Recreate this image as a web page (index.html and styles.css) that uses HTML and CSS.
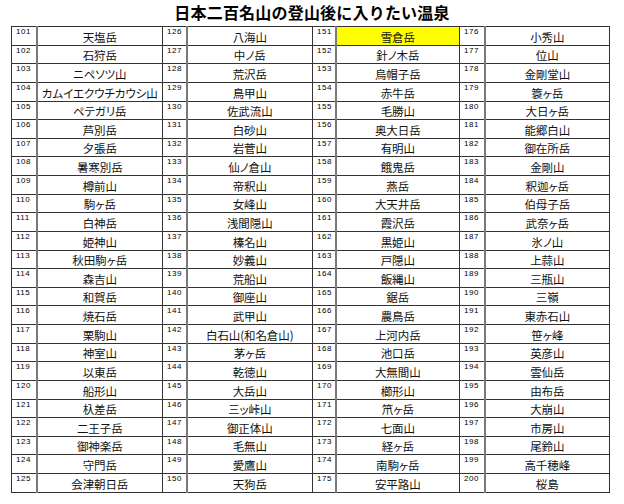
FILE: index.html
```html
<!DOCTYPE html>
<html lang="ja">
<head>
<meta charset="utf-8">
<title>日本二百名山の登山後に入りたい温泉</title>
<link rel="stylesheet" href="styles.css">
</head>
<body>
<h1 class="title">日本二百名山の登山後に入りたい温泉</h1>
<table class="list">
<colgroup>
<col class="c-n1"><col class="c-m1"><col class="c-n2"><col class="c-m2"><col class="c-n3"><col class="c-m3"><col class="c-n4"><col class="c-m4">
</colgroup>
<tbody>
<tr><td class="no">101</td><td class="nm">天塩岳</td><td class="no">126</td><td class="nm">八海山</td><td class="no">151</td><td class="nm hl">雪倉岳</td><td class="no">176</td><td class="nm">小秀山</td></tr>
<tr><td class="no">102</td><td class="nm">石狩岳</td><td class="no">127</td><td class="nm">中ノ岳</td><td class="no">152</td><td class="nm">針ノ木岳</td><td class="no">177</td><td class="nm">位山</td></tr>
<tr><td class="no">103</td><td class="nm">ニペソツ山</td><td class="no">128</td><td class="nm">荒沢岳</td><td class="no">153</td><td class="nm">烏帽子岳</td><td class="no">178</td><td class="nm">金剛堂山</td></tr>
<tr><td class="no">104</td><td class="nm">カムイエクウチカウシ山</td><td class="no">129</td><td class="nm">鳥甲山</td><td class="no">154</td><td class="nm">赤牛岳</td><td class="no">179</td><td class="nm">簑ヶ岳</td></tr>
<tr><td class="no">105</td><td class="nm">ペテガリ岳</td><td class="no">130</td><td class="nm">佐武流山</td><td class="no">155</td><td class="nm">毛勝山</td><td class="no">180</td><td class="nm">大日ヶ岳</td></tr>
<tr><td class="no">106</td><td class="nm">芦別岳</td><td class="no">131</td><td class="nm">白砂山</td><td class="no">156</td><td class="nm">奥大日岳</td><td class="no">181</td><td class="nm">能郷白山</td></tr>
<tr><td class="no">107</td><td class="nm">夕張岳</td><td class="no">132</td><td class="nm">岩菅山</td><td class="no">157</td><td class="nm">有明山</td><td class="no">182</td><td class="nm">御在所岳</td></tr>
<tr><td class="no">108</td><td class="nm">暑寒別岳</td><td class="no">133</td><td class="nm">仙ノ倉山</td><td class="no">158</td><td class="nm">餓鬼岳</td><td class="no">183</td><td class="nm">金剛山</td></tr>
<tr><td class="no">109</td><td class="nm">樽前山</td><td class="no">134</td><td class="nm">帝釈山</td><td class="no">159</td><td class="nm">燕岳</td><td class="no">184</td><td class="nm">釈迦ヶ岳</td></tr>
<tr><td class="no">110</td><td class="nm">駒ヶ岳</td><td class="no">135</td><td class="nm">女峰山</td><td class="no">160</td><td class="nm">大天井岳</td><td class="no">185</td><td class="nm">伯母子岳</td></tr>
<tr><td class="no">111</td><td class="nm">白神岳</td><td class="no">136</td><td class="nm">浅間隠山</td><td class="no">161</td><td class="nm">霞沢岳</td><td class="no">186</td><td class="nm">武奈ヶ岳</td></tr>
<tr><td class="no">112</td><td class="nm">姫神山</td><td class="no">137</td><td class="nm">榛名山</td><td class="no">162</td><td class="nm">黒姫山</td><td class="no">187</td><td class="nm">氷ノ山</td></tr>
<tr><td class="no">113</td><td class="nm">秋田駒ヶ岳</td><td class="no">138</td><td class="nm">妙義山</td><td class="no">163</td><td class="nm">戸隠山</td><td class="no">188</td><td class="nm">上蒜山</td></tr>
<tr><td class="no">114</td><td class="nm">森吉山</td><td class="no">139</td><td class="nm">荒船山</td><td class="no">164</td><td class="nm">飯縄山</td><td class="no">189</td><td class="nm">三瓶山</td></tr>
<tr><td class="no">115</td><td class="nm">和賀岳</td><td class="no">140</td><td class="nm">御座山</td><td class="no">165</td><td class="nm">鋸岳</td><td class="no">190</td><td class="nm">三嶺</td></tr>
<tr><td class="no">116</td><td class="nm">焼石岳</td><td class="no">141</td><td class="nm">武甲山</td><td class="no">166</td><td class="nm">農鳥岳</td><td class="no">191</td><td class="nm">東赤石山</td></tr>
<tr><td class="no">117</td><td class="nm">栗駒山</td><td class="no">142</td><td class="nm">白石山(和名倉山)</td><td class="no">167</td><td class="nm">上河内岳</td><td class="no">192</td><td class="nm">笹ヶ峰</td></tr>
<tr><td class="no">118</td><td class="nm">神室山</td><td class="no">143</td><td class="nm">茅ヶ岳</td><td class="no">168</td><td class="nm">池口岳</td><td class="no">193</td><td class="nm">英彦山</td></tr>
<tr><td class="no">119</td><td class="nm">以東岳</td><td class="no">144</td><td class="nm">乾徳山</td><td class="no">169</td><td class="nm">大無間山</td><td class="no">194</td><td class="nm">雲仙岳</td></tr>
<tr><td class="no">120</td><td class="nm">船形山</td><td class="no">145</td><td class="nm">大岳山</td><td class="no">170</td><td class="nm">櫛形山</td><td class="no">195</td><td class="nm">由布岳</td></tr>
<tr><td class="no">121</td><td class="nm">杁差岳</td><td class="no">146</td><td class="nm">三ッ峠山</td><td class="no">171</td><td class="nm">笊ヶ岳</td><td class="no">196</td><td class="nm">大崩山</td></tr>
<tr><td class="no">122</td><td class="nm">二王子岳</td><td class="no">147</td><td class="nm">御正体山</td><td class="no">172</td><td class="nm">七面山</td><td class="no">197</td><td class="nm">市房山</td></tr>
<tr><td class="no">123</td><td class="nm">御神楽岳</td><td class="no">148</td><td class="nm">毛無山</td><td class="no">173</td><td class="nm">経ヶ岳</td><td class="no">198</td><td class="nm">尾鈴山</td></tr>
<tr><td class="no">124</td><td class="nm">守門岳</td><td class="no">149</td><td class="nm">愛鷹山</td><td class="no">174</td><td class="nm">南駒ヶ岳</td><td class="no">199</td><td class="nm">高千穂峰</td></tr>
<tr><td class="no">125</td><td class="nm">会津朝日岳</td><td class="no">150</td><td class="nm">天狗岳</td><td class="no">175</td><td class="nm">安平路山</td><td class="no">200</td><td class="nm">桜島</td></tr>
</tbody>
</table>
</body>
</html>
```
FILE: styles.css
```css
html, body {
  margin: 0;
  padding: 0;
  background: #ffffff;
}
body {
  width: 624px;
  height: 504px;
  overflow: hidden;
  font-family: "Noto Sans CJK JP", "Noto Sans", sans-serif;
  color: #000;
}
.title {
  margin: 0;
  height: 26px;
  line-height: 25px;
  font-size: 16px;
  font-weight: bold;
  text-align: center;
  letter-spacing: 0.2px;
}
.list {
  margin-left: 11px;
  border-collapse: collapse;
  table-layout: fixed;
  width: 598px;
}
.c-n1 { width: 25px; }
.c-m1 { width: 126px; }
.c-n2 { width: 24px; }
.c-m2 { width: 126px; }
.c-n3 { width: 23px; }
.c-m3 { width: 124px; }
.c-n4 { width: 25px; }
.c-m4 { width: 125px; }
.list tr {
  height: 18.64px;
}
.list td {
  border: 1px solid #333;
  padding: 0;
  overflow: hidden;
  white-space: nowrap;
}
.no {
  font-family: "Liberation Sans", "DejaVu Sans", sans-serif;
  font-size: 8px;
  line-height: 10px;
  vertical-align: top;
  padding-left: 4px !important;
  border-right: 2px solid #7a7a7a !important;
  letter-spacing: 0.5px;
}
.nm {
  font-size: 11.5px;
  line-height: 14px;
  text-align: center;
  vertical-align: bottom;
  padding-bottom: 1px !important;
  font-feature-settings: "palt" 1;
  letter-spacing: -0.1px;
  color: #111;
}
.hl {
  background: #ffff00;
}
```
